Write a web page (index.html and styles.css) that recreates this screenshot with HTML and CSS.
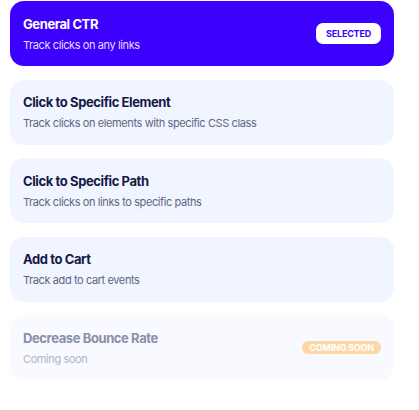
FILE: index.html
```html
<!DOCTYPE html>
<html lang="en">
<head>
  <meta charset="UTF-8" />
  <meta name="viewport" content="width=device-width, initial-scale=1.0"/>
  <title>Goals</title>
  <link rel="stylesheet" href="styles.css">
</head>
<body>

  <!-- daftar tujuan -->
  <div class="goal-list">
    <div class="goal selected">
      <div class="goal-text">
        <div class="goal-title">General CTR</div>
        <div class="goal-desc">Track clicks on any links</div>
      </div>
      <span class="badge badge-selected">SELECTED</span>
    </div>

    <div class="goal">
      <div class="goal-text">
        <div class="goal-title">Click to Specific Element</div>
        <div class="goal-desc">Track clicks on elements with specific CSS class</div>
      </div>
    </div>

    <div class="goal">
      <div class="goal-text">
        <div class="goal-title">Click to Specific Path</div>
        <div class="goal-desc">Track clicks on links to specific paths</div>
      </div>
    </div>

    <div class="goal">
      <div class="goal-text">
        <div class="goal-title">Add to Cart</div>
        <div class="goal-desc">Track add to cart events</div>
      </div>
    </div>

    <div class="goal disabled">
      <div class="goal-text">
        <div class="goal-title">Decrease Bounce Rate</div>
        <div class="goal-desc">Coming soon</div>
      </div>
      <span class="badge badge-soon">COMING SOON</span>
    </div>
  </div>

</body>
</html>
```

FILE: styles.css
```css
body {
  margin: 0;
  padding: 0;
  font-family: 'Inter', 'Noto Sans', sans-serif;
  background: #fff;
}

.goal-list {
  width: 384px;
  margin: 1px 0 0 10px;
  display: flex;
  flex-direction: column;
  gap: 13.5px;
}

.goal {
  height: 65px;
  box-sizing: border-box;
  padding: 0 13px;
  border-radius: 14px;
  background: #f0f5ff;
  display: flex;
  align-items: center;
  justify-content: space-between;
}

.goal-title {
  font-size: 13px;
  font-weight: 700;
  color: #161a45;
  letter-spacing: -0.4px;
  line-height: 16px;
}

.goal-desc {
  margin-top: 6px;
  font-size: 11px;
  color: #5d6784;
  letter-spacing: -0.4px;
  line-height: 14px;
}

.goal.selected {
  background: #3c00ff;
}

.goal.selected .goal-title {
  color: #fff;
}

.goal.selected .goal-desc {
  color: #e4defe;
}

.goal.disabled {
  background: #f8faff;
}

.goal.disabled .goal-title {
  color: #8a8ea9;
}

.goal.disabled .goal-desc {
  color: #b0b5c6;
}

.badge {
  font-weight: 700;
  font-size: 9px;
  letter-spacing: -0.2px;
}

.badge-selected {
  background: #fff;
  color: #3c00ff;
  padding: 5px 10px;
  border-radius: 7px;
}

.badge-soon {
  background: #fdd8a5;
  color: #fff;
  padding: 1px 7px;
  border-radius: 6px;
}
```
